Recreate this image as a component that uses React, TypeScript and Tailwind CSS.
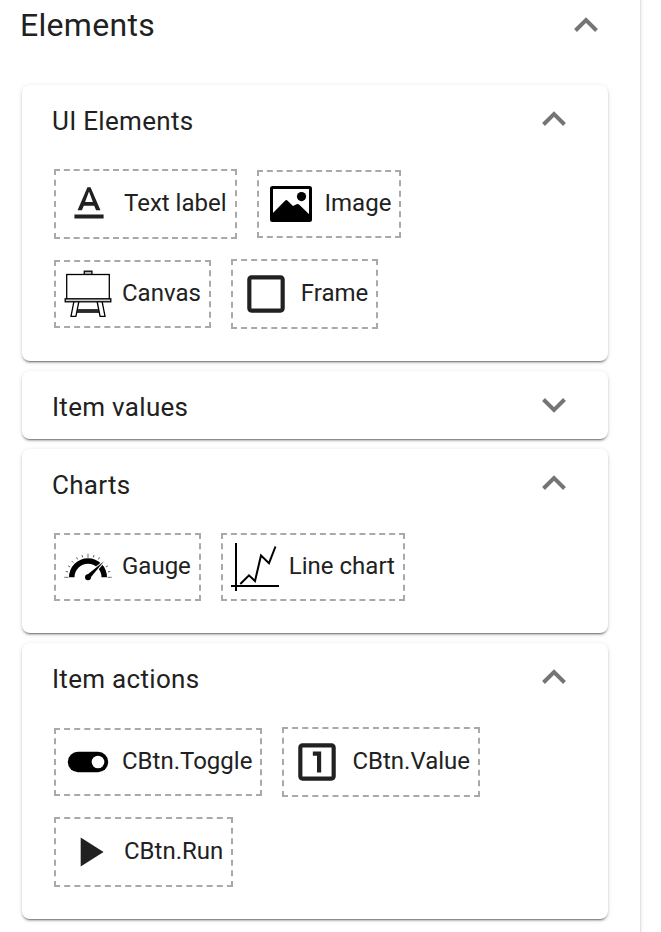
import type { ReactNode } from 'react';

const panelShadow =
  'shadow-[0_3px_1px_-2px_rgba(0,0,0,0.3),0_2px_2px_0_rgba(0,0,0,0.2),0_1px_5px_0_rgba(0,0,0,0.12)]';

function Chevron({ down = false }: { down?: boolean }) {
  return (
    <svg width="24" height="16" viewBox="0 0 24 16" className={down ? 'rotate-180' : ''}>
      <path d="M1.5 13.5 12 3l10.5 10.5" fill="none" stroke="#757575" strokeWidth="4" />
    </svg>
  );
}

function MaterialIcon({ d }: { d: string }) {
  return (
    <svg width="50" height="50" viewBox="0 0 24 24" fill="#212121" className="shrink-0">
      <path d={d} />
    </svg>
  );
}

function Picture({ children }: { children: ReactNode }) {
  return (
    <svg width="48" height="48" viewBox="0 0 48 48" className="shrink-0">
      {children}
    </svg>
  );
}

function ImageIcon() {
  return (
    <Picture>
      <rect x="4.5" y="7.5" width="39" height="33" rx="1" fill="none" stroke="#000" strokeWidth="3" />
      <circle cx="34.5" cy="16.6" r="4.6" />
      <path d="M5 34 18 20.7q1.3-1.3 2.6 0l5.4 5.3 3.6-1.8q1.3-.7 2.4.4L43 35v5H5z" />
    </Picture>
  );
}

function CanvasIcon() {
  return (
    <Picture>
      <g stroke="#000" strokeWidth="1.3">
        <path d="M12 39.8h24v2.4H12z" fill="#555" />
        <path d="M10 31 7 46.4h4.9L15 31zM33 31l3.1 15.4H41L38 31z" fill="#fff" />
        <rect x="20.3" y="1.2" width="7.6" height="4" fill="#bbb" />
        <rect x="2.7" y="4.5" width="42.6" height="25" fill="#fff" />
        <rect x="1.2" y="28.8" width="45.6" height="3" fill="#ccd0cd" />
      </g>
    </Picture>
  );
}

function GaugeIcon() {
  const ticks = Array.from({ length: 13 }, (_, i) => i * 15);
  return (
    <Picture>
      {ticks.map((a) => (
        <path
          key={a}
          d={a % 90 === 0 ? 'M0.3 34.3h4.2' : 'M1 34.3h2.4'}
          stroke="#333"
          strokeWidth="0.7"
          transform={`rotate(${a} 24 34.3)`}
        />
      ))}
      <path d="M5 34.3a19 19 0 0 1 38 0h-5.5a13.5 13.5 0 0 0-27 0z" />
      <path d="M22.5 32.5 40.5 17.8 25.7 35.6z" stroke="#fff" strokeWidth="1.8" />
      <path d="M22.3 32.4 40 18.2 25.8 35.6z" />
      <circle cx="24" cy="34.2" r="3" />
    </Picture>
  );
}

function LineChartIcon() {
  return (
    <Picture>
      <path d="M5 0v48M0 43h48" stroke="#000" strokeWidth="2" />
      <path
        d="M9.3 41 18 32.3l6 5.7 6-25.5 8 7.7L44.5 3.5"
        fill="none"
        stroke="#000"
        strokeWidth="2"
      />
    </Picture>
  );
}

function ToggleIcon() {
  return (
    <Picture>
      <rect x="3.8" y="13.8" width="40.4" height="20.4" rx="10.2" />
      <circle cx="34" cy="24" r="6.3" fill="#fff" />
    </Picture>
  );
}

function Chip({ icon, label }: { icon: ReactNode; label: string }) {
  return (
    <div className="flex items-center gap-2.5 border-2 border-dashed border-[#a9a9a9] p-2">
      {icon}
      <span className="pb-[2px] text-[24px] leading-7 whitespace-nowrap">{label}</span>
    </div>
  );
}

function Panel({
  title,
  children,
  className,
  closed = false,
}: {
  title: string;
  children?: ReactNode;
  className: string;
  closed?: boolean;
}) {
  return (
    <section className={`rounded-lg bg-white pr-[42px] pl-[30px] ${panelShadow} ${className}`}>
      <div className="flex h-[68px] items-center justify-between">
        <h2 className="pt-1 text-[26px] leading-8 tracking-[0.3px]">{title}</h2>
        <Chevron down={closed} />
      </div>
      {children}
    </section>
  );
}

function Row({ children }: { children: ReactNode }) {
  return <div className="ml-[2px] flex items-center gap-5">{children}</div>;
}

export default function App() {
  return (
    <main className="h-[932px] w-[661px] overflow-hidden bg-white font-['Roboto',sans-serif] text-[#212121]">
      <div className={`-mt-4 h-[964px] w-[640px] bg-white pt-4 pr-8 pl-[22px] ${panelShadow}`}>
        <div className="-ml-[2px] flex h-[85px] items-start justify-between pr-[10px]">
          <h1 className="pt-[5px] text-[32px] leading-10 tracking-[0.3px]">Elements</h1>
          <div className="pt-[17px]">
            <Chevron />
          </div>
        </div>
        <div className="flex flex-col gap-[10px]">
          <Panel title="UI Elements" className="h-[276px]">
            <div className="flex flex-col gap-5 pt-4">
              <Row>
                <Chip
                  icon={
                    <MaterialIcon d="M5 17v2h14v-2H5zm4.5-4.2h5l.9 2.2h2.1L12.75 4h-1.5L6.5 15h2.1l.9-2.2zM12 5.98 13.87 11h-3.74L12 5.98z" />
                  }
                  label="Text label"
                />
                <Chip icon={<ImageIcon />} label="Image" />
              </Row>
              <Row>
                <Chip icon={<CanvasIcon />} label="Canvas" />
                <Chip
                  icon={
                    <MaterialIcon d="M19 5v14H5V5h14m0-2H5c-1.1 0-2 .9-2 2v14c0 1.1.9 2 2 2h14c1.1 0 2-.9 2-2V5c0-1.1-.9-2-2-2z" />
                  }
                  label="Frame"
                />
              </Row>
            </div>
          </Panel>
          <Panel title="Item values" className="h-[68px]" closed />
          <Panel title="Charts" className="h-[184px]">
            <div className="pt-4">
              <Row>
                <Chip icon={<GaugeIcon />} label="Gauge" />
                <Chip icon={<LineChartIcon />} label="Line chart" />
              </Row>
            </div>
          </Panel>
          <Panel title="Item actions" className="h-[276px]">
            <div className="flex flex-col gap-5 pt-4">
              <Row>
                <Chip icon={<ToggleIcon />} label="CBtn.Toggle" />
                <Chip
                  icon={
                    <MaterialIcon d="M19 3H5c-1.1 0-2 .9-2 2v14c0 1.1.9 2 2 2h14c1.1 0 2-.9 2-2V5c0-1.1-.9-2-2-2zm0 16H5V5h14v14zm-5-12h-4v2h2v8h2z" />
                  }
                  label="CBtn.Value"
                />
              </Row>
              <Row>
                <Chip icon={<MaterialIcon d="M8 5v14l11-7z" />} label="CBtn.Run" />
              </Row>
            </div>
          </Panel>
        </div>
      </div>
    </main>
  );
}
